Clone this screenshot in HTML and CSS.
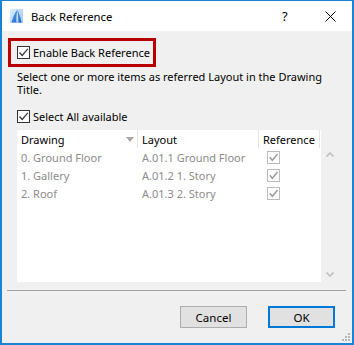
FILE: index.html
```html
<!DOCTYPE html>
<html>
<head>
<meta charset="utf-8">
<link rel="stylesheet" href="styles.css">
</head>
<body>
<div class="window">
  <div class="titlebar">
    <svg class="appicon" width="13" height="14" viewBox="0 0 13 14">
      <defs>
        <linearGradient id="g" x1="0" y1="0" x2="1" y2="1">
          <stop offset="0" stop-color="#dbeefe"/>
          <stop offset="1" stop-color="#9cc8f0"/>
        </linearGradient>
        <linearGradient id="g2" x1="0" y1="0" x2="1" y2="1">
          <stop offset="0" stop-color="#5ea4ec"/>
          <stop offset="1" stop-color="#1660c8"/>
        </linearGradient>
      </defs>
      <rect x="0" y="0" width="13" height="14" fill="url(#g)"/>
      <path d="M1.5 13.5 C3 8 5 3 7.5 1 C9 4 10.5 9 11.5 13.5 Z" fill="url(#g2)"/>
      <path d="M7.5 1 C6.5 5 6 9 6.5 13.5 L8.5 13.5 C8.3 9 8 5 7.5 1 Z" fill="#e8f3fd" opacity="0.8"/>
    </svg>
    <span class="title">Back Reference</span>
    <span class="help">?</span>
    <svg class="close" width="11" height="11" viewBox="0 0 11 11"><path d="M0.5 0.5 L10.5 10.5 M10.5 0.5 L0.5 10.5" stroke="#000" stroke-width="1" fill="none"/></svg>
  </div>

  <div class="content">
    <div class="highlight">
      <span class="check"><svg width="11" height="11" viewBox="0 0 11 11"><path d="M1.5 5.5 L4.2 8.5 L9.8 1.8" stroke="#333" stroke-width="1.2" fill="none"/></svg></span>
      <span class="label">Enable Back Reference</span>
    </div>
    <p class="desc">Select one or more items as referred Layout in the Drawing Title.</p>
    <div class="selectall">
      <span class="check"><svg width="11" height="11" viewBox="0 0 11 11"><path d="M1.5 5.5 L4.2 8.5 L9.8 1.8" stroke="#333" stroke-width="1.2" fill="none"/></svg></span>
      <span class="label">Select All available</span>
    </div>

    <div class="table">
      <div class="list">
        <div class="row header">
          <div class="cell c1">Drawing<svg class="sort" width="8" height="5" viewBox="0 0 8 5"><path d="M0 0 L8 0 L4 5 Z" fill="#a8a8a8"/></svg></div>
          <div class="cell c2">Layout</div>
          <div class="cell c3">Reference</div>
        </div>
        <div class="row">
          <div class="cell c1">0. Ground Floor</div>
          <div class="cell c2">A.01.1 Ground Floor</div>
          <div class="cell c3"><span class="dcheck"><svg width="11" height="11" viewBox="0 0 11 11"><path d="M1.8 5.3 L4.3 8.3 L9.5 2" stroke="#9a9a9a" stroke-width="1.4" fill="none"/></svg></span></div>
        </div>
        <div class="row">
          <div class="cell c1">1. Gallery</div>
          <div class="cell c2">A.01.2 1. Story</div>
          <div class="cell c3"><span class="dcheck"><svg width="11" height="11" viewBox="0 0 11 11"><path d="M1.8 5.3 L4.3 8.3 L9.5 2" stroke="#9a9a9a" stroke-width="1.4" fill="none"/></svg></span></div>
        </div>
        <div class="row">
          <div class="cell c1">2. Roof</div>
          <div class="cell c2">A.01.3 2. Story</div>
          <div class="cell c3"><span class="dcheck"><svg width="11" height="11" viewBox="0 0 11 11"><path d="M1.8 5.3 L4.3 8.3 L9.5 2" stroke="#9a9a9a" stroke-width="1.4" fill="none"/></svg></span></div>
        </div>
      </div>
      <div class="scrollbar">
        <svg width="8" height="5" viewBox="0 0 8 5"><path d="M0.5 4.5 L4 1 L7.5 4.5" stroke="#c0c0c0" stroke-width="1.6" fill="none"/></svg>
        <svg width="8" height="5" viewBox="0 0 8 5"><path d="M0.5 0.5 L4 4 L7.5 0.5" stroke="#c0c0c0" stroke-width="1.6" fill="none"/></svg>
      </div>
    </div>
  </div>

  <div class="separator"></div>
  <div class="buttons">
    <button class="btn">Cancel</button>
    <button class="btn primary">OK</button>
  </div>
  <svg class="grip" width="10" height="10" viewBox="0 0 10 10">
    <rect x="7" y="1" width="2" height="2" fill="#b8b8b8"/>
    <rect x="4" y="4" width="2" height="2" fill="#b8b8b8"/>
    <rect x="7" y="4" width="2" height="2" fill="#b8b8b8"/>
    <rect x="1" y="7" width="2" height="2" fill="#b8b8b8"/>
    <rect x="4" y="7" width="2" height="2" fill="#b8b8b8"/>
    <rect x="7" y="7" width="2" height="2" fill="#b8b8b8"/>
  </svg>
</div>
</body>
</html>
```

FILE: styles.css
```css
* { box-sizing: border-box; }
html, body {
  margin: 0;
  padding: 0;
  width: 354px;
  height: 345px;
  overflow: hidden;
  background: #f0f0f0;
}
body {
  font-family: "Noto Sans", "Open Sans", sans-serif;
  font-size: 11px;
  color: #000;
}
.window {
  position: relative;
  width: 354px;
  height: 345px;
  border: 2px solid #1883d7;
  border-top-width: 1px;
  background: #f0f0f0;
  display: flex;
  flex-direction: column;
}
.titlebar {
  height: 30px;
  background: #fff;
  display: flex;
  align-items: center;
  padding-left: 8px;
  flex-shrink: 0;
}
.title {
  margin-left: 8px;
  font-size: 11.3px;
  color: #000;
}
.help {
  margin-left: auto;
  font-size: 13px;
  width: 8px;
}
.close {
  margin-left: 35px;
  margin-right: 16px;
}
.content {
  padding: 7px 0 0 6px;
}
.highlight {
  display: flex;
  align-items: center;
  width: 148px;
  height: 29px;
  border: 3px solid #b80000;
  padding-left: 6px;
}
.check {
  width: 13px;
  height: 13px;
  border: 1px solid #333;
  background: #fff;
  display: inline-flex;
  align-items: center;
  justify-content: center;
  flex-shrink: 0;
}
.check svg { display: block; }
.label { margin-left: 3px; white-space: nowrap; }
.desc {
  margin: 3px 0 0 9px;
  line-height: 13px;
  width: 318px;
}
.selectall {
  display: flex;
  align-items: center;
  margin: 12px 0 0 9px;
  height: 16px;
}
.table {
  margin: 6px 0 0 9px;
  width: 321px;
  height: 152px;
  display: flex;
}
.list {
  width: 304px;
  background: #fff;
}
.row {
  display: flex;
  height: 18px;
  align-items: center;
  color: #8c8c8c;
}
.row.header {
  color: #000;
}
.cell {
  padding-left: 4px;
  height: 18px;
  display: flex;
  align-items: center;
  white-space: nowrap;
}
.c1 { width: 121px; }
.c2 { width: 121px; }
.c3 { width: 61px; }
.header .c1, .header .c2, .header .c3 { border-right: 1px solid #e5e5e5; }
.sort { margin-left: auto; margin-right: 3px; }
.dcheck {
  width: 13px;
  height: 13px;
  border: 1px solid #bcbcbc;
  background: #fff;
  display: inline-flex;
  align-items: center;
  justify-content: center;
  margin-left: 4px;
}
.dcheck svg { display: block; }
.scrollbar {
  width: 17px;
  background: #f0f0f0;
  display: flex;
  flex-direction: column;
  align-items: center;
  justify-content: space-between;
  padding: 22px 0 5px 0;
}
.scrollbar svg { display: block; }
.separator {
  height: 1px;
  background: #a0a0a0;
  margin: 8px 6px 0 5px;
}
.buttons {
  display: flex;
  justify-content: flex-end;
  gap: 21px;
  padding: 15px 17px 0 0;
}
.btn {
  width: 67px;
  height: 22px;
  background: #e1e1e1;
  border: 1px solid #adadad;
  font-family: inherit;
  font-size: 11.5px;
  color: #000;
  padding: 0;
  margin: 0;
}
.btn.primary {
  border: 2px solid #0078d7;
}
.grip {
  position: absolute;
  right: 1px;
  bottom: 1px;
}
```
